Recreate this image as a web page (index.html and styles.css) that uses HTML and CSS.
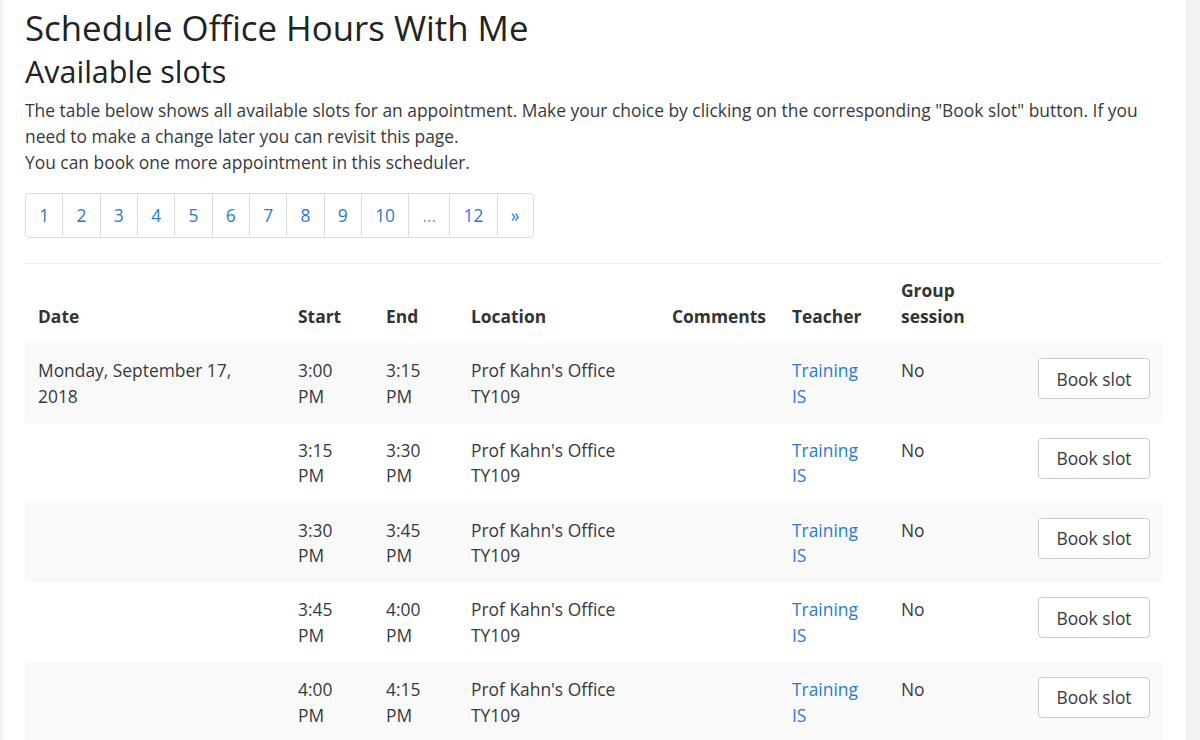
FILE: index.html
```html
<!DOCTYPE html>
<html lang="en">
<head>
<meta charset="utf-8">
<title>Schedule Office Hours With Me</title>
<link rel="stylesheet" href="styles.css">
</head>
<body class="page">
<main class="content">
  <h2 class="title">Schedule Office Hours With Me</h2>
  <h3 class="subtitle">Available slots</h3>
  <p class="intro">The table below shows all available slots for an appointment. Make your choice by clicking on the corresponding "Book slot" button. If you need to make a change later you can revisit this page.<br>You can book one more appointment in this scheduler.</p>
  <nav class="pager">
    <a class="pager-item" href="#">1</a>
    <a class="pager-item" href="#">2</a>
    <a class="pager-item" href="#">3</a>
    <a class="pager-item" href="#">4</a>
    <a class="pager-item" href="#">5</a>
    <a class="pager-item" href="#">6</a>
    <a class="pager-item" href="#">7</a>
    <a class="pager-item" href="#">8</a>
    <a class="pager-item" href="#">9</a>
    <a class="pager-item" href="#">10</a>
    <span class="pager-item pager-gap">...</span>
    <a class="pager-item" href="#">12</a>
    <a class="pager-item" href="#">»</a>
  </nav>
  <hr class="divider">
  <table class="slots">
    <colgroup>
      <col class="c-date"><col class="c-start"><col class="c-end"><col class="c-loc"><col class="c-com"><col class="c-teach"><col class="c-group"><col class="c-btn">
    </colgroup>
    <thead>
      <tr><th>Date</th><th>Start</th><th>End</th><th>Location</th><th>Comments</th><th>Teacher</th><th>Group session</th><th></th></tr>
    </thead>
    <tbody>
      <tr><td>Monday, September 17, 2018</td><td>3:00 PM</td><td>3:15 PM</td><td>Prof Kahn's Office TY109</td><td></td><td><a class="teacher" href="#">Training IS</a></td><td>No</td><td class="act"><button class="book">Book slot</button></td></tr>
      <tr><td></td><td>3:15 PM</td><td>3:30 PM</td><td>Prof Kahn's Office TY109</td><td></td><td><a class="teacher" href="#">Training IS</a></td><td>No</td><td class="act"><button class="book">Book slot</button></td></tr>
      <tr><td></td><td>3:30 PM</td><td>3:45 PM</td><td>Prof Kahn's Office TY109</td><td></td><td><a class="teacher" href="#">Training IS</a></td><td>No</td><td class="act"><button class="book">Book slot</button></td></tr>
      <tr><td></td><td>3:45 PM</td><td>4:00 PM</td><td>Prof Kahn's Office TY109</td><td></td><td><a class="teacher" href="#">Training IS</a></td><td>No</td><td class="act"><button class="book">Book slot</button></td></tr>
      <tr><td></td><td>4:00 PM</td><td>4:15 PM</td><td>Prof Kahn's Office TY109</td><td></td><td><a class="teacher" href="#">Training IS</a></td><td>No</td><td class="act"><button class="book">Book slot</button></td></tr>
    </tbody>
  </table>
</main>
</body>
</html>
```
FILE: styles.css
```css
.page {
  margin: 0;
  background: #f3f3f3;
  font-family: "Open Sans", "Liberation Sans", sans-serif;
  color: #373a3c;
  font-size: 17.4px;
}
.content {
  margin-left: 3px;
  width: 1138px;
  padding: 0 22px 40px;
  background: #fff;
  min-height: 740px;
}
.title {
  margin: 0;
  padding-top: 8px;
  font-size: 34.8px;
  font-weight: 400;
  line-height: 40px;
  color: #222;
}
.subtitle {
  margin: 6px 0 0;
  font-size: 30.5px;
  font-weight: 400;
  line-height: 34px;
  color: #222;
}
.intro {
  margin: 9px 0 18px;
  line-height: 26px;
  font-size: 17.4px;
}
.pager {
  display: inline-flex;
  border: 1px solid #ddd;
  border-radius: 4px;
  overflow: hidden;
}
.pager-item {
  display: block;
  padding: 0 13.2px;
  line-height: 43px;
  font-size: 17.4px;
  color: #2a7ad6;
  text-decoration: none;
  border-left: 1px solid #ddd;
  text-align: center;
}
.pager-item:first-child { border-left: none; }
.pager-gap { color: #999; }
.divider {
  margin: 25px 0 0;
  border: none;
  border-top: 1px solid #eee;
}
.slots {
  width: 1138px;
  border-collapse: collapse;
  table-layout: fixed;
}
.c-date { width: 260px; }
.c-start { width: 88px; }
.c-end { width: 85px; }
.c-loc { width: 201px; }
.c-com { width: 120px; }
.c-teach { width: 109px; }
.c-group { width: 137px; }
.c-btn { width: 138px; }
.slots th {
  text-align: left;
  vertical-align: bottom;
  font-weight: 700;
  padding: 14px 13px 14px;
  line-height: 25.6px;
  color: #333;
}
.slots td {
  vertical-align: top;
  padding: 15px 13px 13.5px;
  line-height: 25.6px;
  height: 51.2px;
}
.slots tbody tr:nth-child(odd) { background: #f9f9f9; }
.teacher { color: #2a7ad6; text-decoration: none; }
.act { text-align: right; }
.book {
  font-family: inherit;
  font-size: 17.4px;
  color: #373a3c;
  background: #fff;
  border: 1px solid #ccc;
  border-radius: 4px;
  width: 112px;
  height: 41px;
  padding: 0;
}
```
